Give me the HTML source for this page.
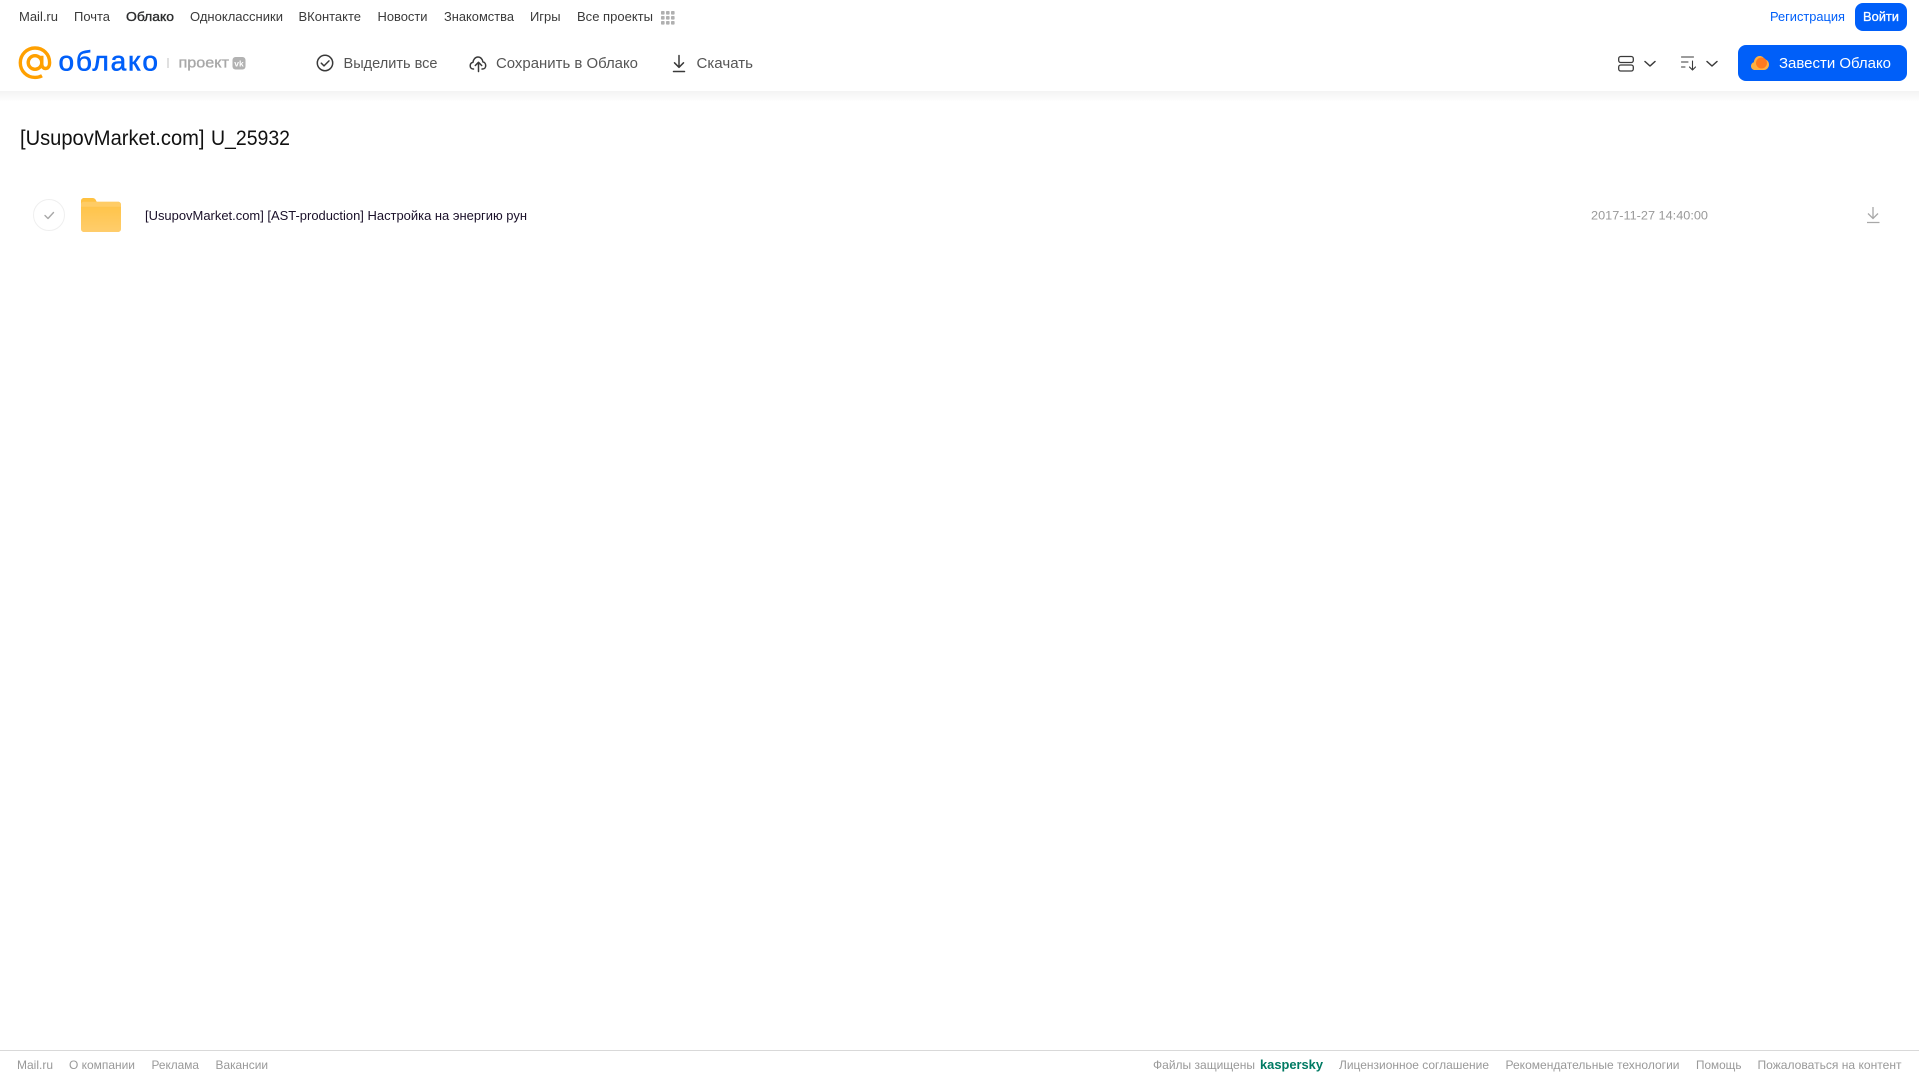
<!DOCTYPE html>
<html lang="ru">
<head>
<meta charset="utf-8">
<title>Облако</title>
<style>
html,body{margin:0;padding:0;background:#fff;width:1919px;height:1079px;overflow:hidden}
svg{display:block;position:absolute;left:0;top:0}
text{font-family:"Liberation Sans",sans-serif}
.nav{font-size:13px;fill:#3a3a3a}
.tb{font-size:15px;fill:#555}
.ft{font-size:12px;fill:#999}
</style>
</head>
<body>
<svg width="1919" height="1079" viewBox="0 0 1919 1079" xmlns="http://www.w3.org/2000/svg">
<defs>
<linearGradient id="sh" x1="0" y1="0" x2="0" y2="1"><stop offset="0" stop-color="#f3f3f3"/><stop offset="1" stop-color="#fff"/></linearGradient>
<linearGradient id="fd" x1="0" y1="0" x2="0" y2="1"><stop offset="0" stop-color="#ffc13f"/><stop offset="1" stop-color="#ffcd6c"/></linearGradient>
</defs>
<rect x="0" y="91" width="1919" height="11" fill="url(#sh)"/>

<!-- top nav -->
<text class="nav" x="19" y="21" textLength="39" lengthAdjust="spacingAndGlyphs">Mail.ru</text>
<text class="nav" x="74" y="21" textLength="36" lengthAdjust="spacingAndGlyphs">Почта</text>
<text class="nav" x="126" y="21" textLength="48" lengthAdjust="spacingAndGlyphs" style="fill:#2c2d2e;stroke:#2c2d2e;stroke-width:.35">Облако</text>
<text class="nav" x="190" y="21" textLength="93" lengthAdjust="spacingAndGlyphs">Одноклассники</text>
<text class="nav" x="298.500" y="21" textLength="62.500" lengthAdjust="spacingAndGlyphs">ВКонтакте</text>
<text class="nav" x="377.500" y="21" textLength="50" lengthAdjust="spacingAndGlyphs">Новости</text>
<text class="nav" x="444" y="21" textLength="70" lengthAdjust="spacingAndGlyphs">Знакомства</text>
<text class="nav" x="530" y="21" textLength="30.500" lengthAdjust="spacingAndGlyphs">Игры</text>
<text class="nav" x="577" y="21" textLength="76" lengthAdjust="spacingAndGlyphs">Все проекты</text>
<g fill="#b0b0b0">
<rect x="661" y="11" width="3.600" height="3.600" rx=".8"/><rect x="666" y="11" width="3.600" height="3.600" rx=".8"/><rect x="671" y="11" width="3.600" height="3.600" rx=".8"/>
<rect x="661" y="16" width="3.600" height="3.600" rx=".8"/><rect x="666" y="16" width="3.600" height="3.600" rx=".8"/><rect x="671" y="16" width="3.600" height="3.600" rx=".8"/>
<rect x="661" y="21" width="3.600" height="3.600" rx=".8"/><rect x="666" y="21" width="3.600" height="3.600" rx=".8"/><rect x="671" y="21" width="3.600" height="3.600" rx=".8"/>
</g>
<text class="nav" x="1770" y="21" textLength="75" lengthAdjust="spacingAndGlyphs" style="fill:#005ff9">Регистрация</text>
<rect x="1855" y="3" width="52" height="28" rx="8" fill="#005ff9"/>
<text class="nav" x="1863" y="21" textLength="36" lengthAdjust="spacingAndGlyphs" style="fill:#fff;stroke:#fff;stroke-width:.3">Войти</text>

<!-- logo -->
<g fill="none" stroke="#ffa000" stroke-width="3.400">
<circle cx="35" cy="62.500" r="6.800"/>
<path d="M41.800 55.700v8.300c0 2.800 1.700 4.500 3.900 4.500 2.500 0 3.900-2.400 3.900-6 0-8.300-6.500-14.500-14.600-14.500-8.200 0-14.700 6.700-14.700 14.700 0 8.300 6.500 14.700 14.700 14.700 2.700 0 5-.6 7-1.700"/>
</g>
<text x="58.500" y="70.500" font-size="28" textLength="99.500" lengthAdjust="spacing" fill="#005ff9" stroke="#005ff9" stroke-width=".6">облако</text>
<rect x="167.500" y="58" width="1" height="10" fill="#c0c0c0"/>
<text x="178.500" y="67.500" font-size="15" textLength="50.500" lengthAdjust="spacingAndGlyphs" fill="#a8a8a8" stroke="#a8a8a8" stroke-width=".35">проект</text>
<rect x="232.500" y="57" width="13" height="12.500" rx="3" fill="#b2b2b2"/>
<text x="234.300" y="66.300" font-size="8" textLength="9.400" lengthAdjust="spacingAndGlyphs" font-weight="700" fill="#fff">vk</text>

<!-- toolbar -->
<g fill="none" stroke="#3a3a3a" stroke-width="1.500" stroke-linecap="round" stroke-linejoin="round">
<circle cx="325" cy="63" r="7.700"/>
<path d="M321.300 63.200l2.700 2.700 5-5"/>
<path d="M473.500 69h-.3c-1.900 0-3-1.500-3-3.300 0-1.700 1.100-3 2.700-3.300.3-3 2.500-5.400 5-5.400 2.600 0 4.700 2.200 5 4.900 1.700.3 2.800 1.900 2.800 3.700 0 1.900-1.200 3.400-3.100 3.400h-.6"/>
<path d="M478.500 71.500v-9M475.300 65.500l3.200-3.200 3.200 3.200"/>
<path d="M679 55.500v11.500M674.500 62.800l4.500 4.500 4.500-4.500M673.500 71.500h11"/>
</g>
<text class="tb" x="343.500" y="68" textLength="94" lengthAdjust="spacingAndGlyphs">Выделить все</text>
<text class="tb" x="496" y="68" textLength="142" lengthAdjust="spacingAndGlyphs">Сохранить в Облако</text>
<text class="tb" x="696.500" y="68" textLength="56.500" lengthAdjust="spacingAndGlyphs">Скачать</text>

<!-- right controls -->
<g fill="none" stroke="#3a3a3a" stroke-width="1.300" stroke-linecap="round" stroke-linejoin="round">
<rect x="1618.700" y="56.500" width="14.600" height="6" rx="2"/>
<rect x="1618.700" y="65" width="14.600" height="6" rx="2"/>
<path d="M1645 61.500l5 4.500 5-4.500" stroke-width="1.500"/>
<path d="M1707 61.500l5 4.500 5-4.500" stroke-width="1.500"/>
<path d="M1681.500 57h12M1681.500 62h6.500M1681.500 67h3.500M1692.500 61v8.500M1689.500 67l3 3 3-3" stroke-width="1.100"/>
</g>
<rect x="1738" y="45" width="169" height="36" rx="8" fill="#005ff9"/>
<g>
<path d="M1755 70c-2.300 0-4-1.700-4-3.900 0-1.800 1.100-3.300 2.800-3.800.4-3.500 2.700-6.300 5.700-6.300 2.400 0 4.300 1.300 5.200 3.400 2.700.4 4.300 2.600 4.300 5.100 0 3-2.200 5.500-5 5.500z" fill="#ffb040"/>
<circle cx="1761.500" cy="63" r="5.500" fill="#ff7a1f"/>
</g>
<text class="tb" x="1779" y="68" textLength="112" lengthAdjust="spacingAndGlyphs" style="fill:#fff">Завести Облако</text>

<!-- title -->
<text x="20" y="145" font-size="21" textLength="184.500" lengthAdjust="spacingAndGlyphs" fill="#111">[UsupovMarket.com]</text>
<text x="211" y="145" font-size="21" textLength="79" lengthAdjust="spacingAndGlyphs" fill="#111">U_25932</text>

<!-- row -->
<circle cx="49" cy="215" r="15.500" fill="#fff" stroke="#efefef" stroke-width="1"/>
<path d="M45 215.500l3 3 5.500-6" fill="none" stroke="#a8a8a8" stroke-width="1.400" stroke-linecap="round" stroke-linejoin="round"/>
<path d="M84 198h8.500c1.500 0 2.500.5 3.300 2l.9 1.700H118c1.800 0 3 1.200 3 3v24.300c0 1.800-1.200 3-3 3H84c-1.800 0-3-1.200-3-3V201c0-1.800 1.200-3 3-3z" fill="url(#fd)"/>
<path d="M81 206.700V204.500c0-1.800 1.200-2.800 3-2.800h34c1.800 0 3 1 3 2.800v2.200z" fill="#ffd27a" opacity=".6"/>
<text x="145" y="220" font-size="12.500" textLength="382" lengthAdjust="spacingAndGlyphs" fill="#1a1029">[UsupovMarket.com] [AST-production] Настройка на энергию рун</text>
<text x="1591" y="219.500" font-size="12" textLength="117" lengthAdjust="spacingAndGlyphs" fill="#999">2017-11-27 14:40:00</text>
<path d="M1873 207v11.500M1868 213.500l5 5 5-5M1867 222.500h12.500" fill="none" stroke="#a8a8a8" stroke-width="1.300"/>

<!-- footer -->
<rect x="0" y="1050" width="1919" height="1" fill="#d9d9d9"/>
<text class="ft" x="17" y="1069" textLength="36" lengthAdjust="spacingAndGlyphs">Mail.ru</text>
<text class="ft" x="69" y="1069" textLength="66" lengthAdjust="spacingAndGlyphs">О компании</text>
<text class="ft" x="151.500" y="1069" textLength="47.500" lengthAdjust="spacingAndGlyphs">Реклама</text>
<text class="ft" x="215.500" y="1069" textLength="52.500" lengthAdjust="spacingAndGlyphs">Вакансии</text>
<text class="ft" x="1153" y="1069" textLength="102" lengthAdjust="spacingAndGlyphs">Файлы защищены</text>
<text x="1260" y="1069" font-size="13" font-weight="700" textLength="63" lengthAdjust="spacingAndGlyphs" fill="#007a63">kaspersky</text>
<text class="ft" x="1339" y="1069" textLength="150" lengthAdjust="spacingAndGlyphs">Лицензионное соглашение</text>
<text class="ft" x="1505.500" y="1069" textLength="174" lengthAdjust="spacingAndGlyphs">Рекомендательные технологии</text>
<text class="ft" x="1696" y="1069" textLength="45.500" lengthAdjust="spacingAndGlyphs">Помощь</text>
<text class="ft" x="1757.500" y="1069" textLength="144" lengthAdjust="spacingAndGlyphs">Пожаловаться на контент</text>
</svg>
</body>
</html>
